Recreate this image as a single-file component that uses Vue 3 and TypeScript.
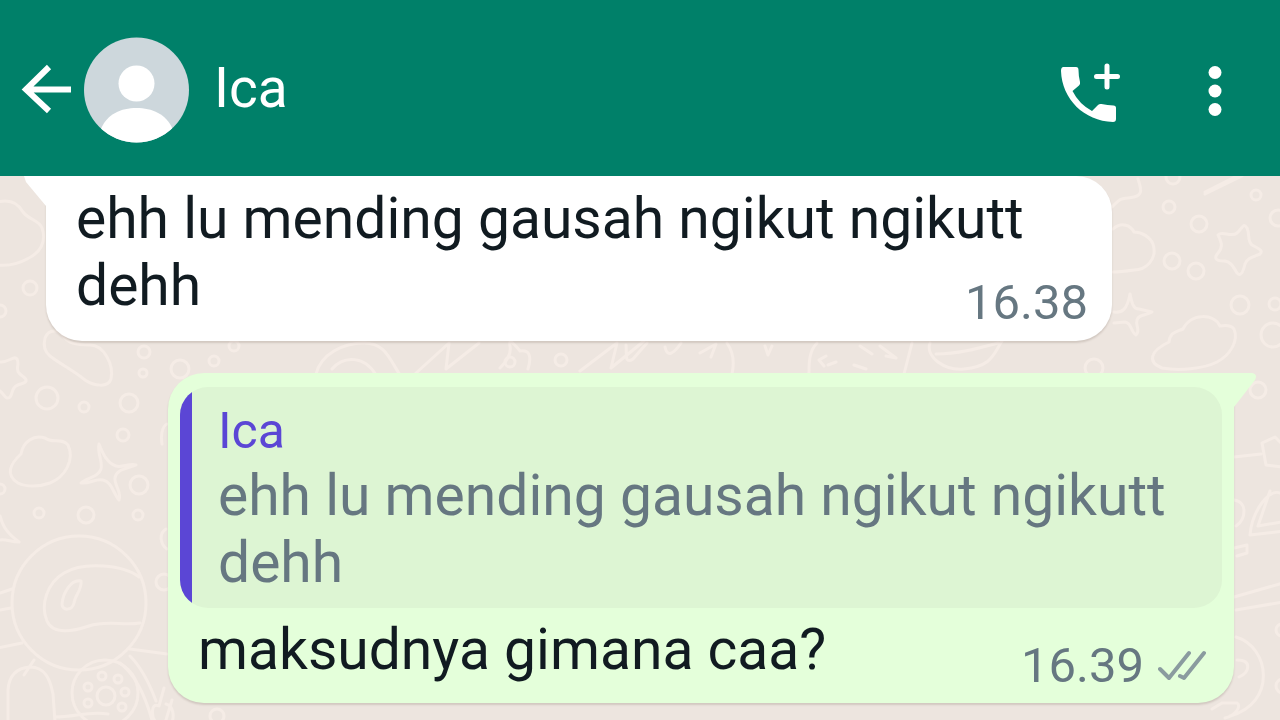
<script setup lang="ts">
interface Dot {
  x: number
  y: number
  r: number
}

const contact = 'Ica'
const original = 'ehh lu mending gausah ngikut ngikutt dehh'
const reply = 'maksudnya gimana caa?'

const dots: Dot[] = [
  { x: 30, y: 288, r: 7 }, { x: 0, y: 311, r: 6 }, { x: 144, y: 352, r: 6 }, { x: 143, y: 373, r: 4 },
  { x: 47, y: 398, r: 11 }, { x: 84, y: 407, r: 5 }, { x: 129, y: 403, r: 9 }, { x: 123, y: 435, r: 6 },
  { x: 139, y: 485, r: 9 }, { x: 86, y: 515, r: 8 }, { x: 39, y: 513, r: 5 }, { x: 138, y: 515, r: 5 },
  { x: 0, y: 489, r: 5 }, { x: 180, y: 369, r: 9 }, { x: 214, y: 361, r: 5 }, { x: 234, y: 346, r: 5 },
  { x: 164, y: 582, r: 8 }, { x: 217, y: 716, r: 7 }, { x: 561, y: 360, r: 6 }, { x: 510, y: 362, r: 5 },
  { x: 1169, y: 207, r: 6 }, { x: 1199, y: 224, r: 8 }, { x: 1172, y: 261, r: 8 }, { x: 1196, y: 271, r: 8 },
  { x: 1256, y: 195, r: 5 }, { x: 1278, y: 218, r: 8 }, { x: 1240, y: 305, r: 9 }, { x: 1275, y: 304, r: 6 },
  { x: 1273, y: 335, r: 12 }, { x: 1258, y: 390, r: 8 }, { x: 1094, y: 368, r: 9 }, { x: 1173, y: 177, r: 7 },
  { x: 1282, y: 630, r: 6 }, { x: 1283, y: 686, r: 7 },
  { x: 102, y: 676, r: 4 }, { x: 118, y: 679, r: 4 }, { x: 125, y: 692, r: 4 }, { x: 122, y: 707, r: 4 },
  { x: 88, y: 687, r: 4 }, { x: 88, y: 703, r: 4 },
]
</script>

<template>
  <div class="screen">
    <header class="bar">
      <button class="icon back" type="button" aria-label="Back">
        <svg viewBox="0 0 52 52" width="52" height="52">
          <path d="M29 5 6 27.500 29 49M6 27.500H51" />
        </svg>
      </button>
      <button class="icon avatar" type="button" aria-label="Profile">
        <svg viewBox="0 0 106 106" width="106" height="106">
          <defs>
            <clipPath id="face"><circle cx="52.500" cy="53" r="52.500" /></clipPath>
          </defs>
          <g clip-path="url(#face)">
            <rect width="106" height="106" fill="#cdd7dc" />
            <circle cx="52.500" cy="46.500" r="18" fill="#fff" />
            <path d="M17 92C23 77 37 71 52.500 71s30 6 36 21v16H17z" fill="#fff" />
          </g>
        </svg>
      </button>
      <h1 class="title">{{ contact }}</h1>
      <button class="icon call" type="button" aria-label="Add call">
        <svg viewBox="0 0 60 60" width="60" height="60">
          <path d="M3.500 4H16q2.500 0 2.500 3 0 6 1.500 12 .5 2-1 3.500L12.500 28Q19 41 32 48l6-6q1.500-1.500 3.500-1 6 1.200 12 1.500 2.500 0 2.500 2.500V56q0 3-3 3C24 58 2 36 1 8q0-4 2.500-4z" fill="#fff" />
          <path class="plus" d="M47 3v21M36.500 13.500h21" />
        </svg>
      </button>
      <button class="icon more" type="button" aria-label="More options">
        <svg viewBox="0 0 14 52" width="14" height="52" fill="#fff">
          <circle cx="7" cy="7.500" r="6.500" />
          <circle cx="7" cy="26" r="6.500" />
          <circle cx="7" cy="44.500" r="6.500" />
        </svg>
      </button>
    </header>

    <main class="chat">
      <svg class="wallpaper" viewBox="0 176 1280 544" preserveAspectRatio="xMinYMin slice" aria-hidden="true">
        <circle v-for="(d, i) in dots" :key="i" :cx="d.x" :cy="d.y" :r="d.r" />
        <path d="M-2 202C10 199 18 203 23 212c6 8 16 8 19 16 5 14-2 25-15 31-9 5-19 7-29 6" />
        <path d="M45 338c4-10 14-8 18-2 5 7 12 9 27 9 14 0 24 20 21 34-3 9-17 7-26 1-12-10-25-16-35-24-5-4-7-10-5-18z" />
        <path d="M0 362c8 1 14-7 17-3 3 5-2 10 2 14 3 4 8 4 7 8-2 4-9 2-12 7-3 4-2 11-7 10-3-1-4-5-7-7" />
        <path d="M21 454c2-12 13-20 24-16 7 6 16-1 23 7 7 15-3 32-18 38-11 4-24 4-32 0-13-8-8-19 3-29z" />
        <path d="M99 444c4 10 8 19 17 22 6 2 13-3 20-1-9 4-20 4-21 13-1 7 7 14 4 22-6-7-7-18-16-20-7-2-13 4-22 3 6-6 17-5 20-14 2-8-4-15-2-25z" />
        <path d="M0 516c2 7 4 15 19 26-8 0-13-3-19-2" />
        <circle cx="79" cy="603" r="67" />
        <path d="M139 577c-15-12-55-16-75-4-17 10-24 32-17 48 6 14 27 10 42 5 17-6 36 0 51-3M81 581c-10-2-18 12-19 23 0 7 10 7 12-1 1-8 8-13 7-22z" />
        <path d="M-2 648 22 643M130 649l37 5M0 593l12-4M0 610l11-2M34 660 24 675M120 663c16 12 25 32 32 57M130 656c12 12 20 29 26 45M8 722V690c1-14 8-22 22-23 15 0 20 12 23 27l2 28M55 717c20 0 33-6 53-3" />
        <circle cx="105" cy="693" r="33" />
        <circle cx="106" cy="696" r="9" />
        <path d="M167 424c-6 3-6 14-5 20M166 529c-8 5-5 16 1 20M164 688l-5 18c-9-4-7 11-4 15M172 700l-6 20M166 704c8 2 8 13 6 18" />
        <path d="M316 374c5-20 27-31 48-31s25 15 36 32M332 369c12-14 33-13 44 6M415 374l34-31-3 26 33-26M580 371l37-28-6 25 33-27M500 368q12-12 10-22t10 5q14-2 8 18M626 345c1 8-2 20 7 14l14-16M665 347c2 10 8 8 16-4M700 353l16-9-5 13M727 343c7 10 7 22 5 31M765 346l3 9 4-9M817 343c-8 8-8 20-8 30M826 356l-7 4 5 6M836 362l-8 3M860 346l12 8M880 346l16 12-10-2M854 365l12 4M912 343l-8 31M930 343c-5 14 15 28 34 26 28-3 29-14 38-28M936 354c22 0 40-5 62-11" />
        <path d="M1112 207c12-12 9-7 22-10 8-2 8-6 4-18M1205 192l32-16M1205 194l37-18" />
        <path d="M1113 229c9-8 18-3 21 3 8 0 16 5 19 12 5 16-8 26-19 26-7 1-15 2-21 2" />
        <path d="M1218 235c4-5 13 3 19-2 6-5 6-11 10-5 3 6 0 13 5 17 5 3 12 5 8 9-7 3-13 4-15 10-2 8-4 13-8 9-4-7-7-12-13-12-7 0-11-2-6-8 5-6 4-10 0-18z" />
        <path d="M1130 294c2 9 3 15 9 15l13 3c-7 4-13 2-15 8-2 6 4 10-1 15-6-4-4-12-11-13l-11 1M1114 312c8 1 13-2 16-18" />
        <path d="M1169 342c1-10 7-10 14-13 8-16 31-16 37-3 6-1 11-1 14 3 5 12-4 26-17 33-14 7-38 9-55 6-15-6-12-17 7-26z" />
        <path d="M1234 457l27-3M1262 443l13-6 8 8v22l-17-2zM1234 500c14 2 12 19 2 26M1282 494c-12-8-30 17-32 41l34-4M1270 491l-12 35 23-4M1234 548l13-3v8l-10 3M1234 597l49-14M1236 610l47-8M1236 637c34 10 41 66-6 79M1237 660c15 0 13 12 2 17M1212 709l10-6h15c5 3-2 13-12 15" />
      </svg>

      <article class="bubble received">
        <svg class="tail" viewBox="0 0 24 32" width="24" height="32" aria-hidden="true">
          <path d="M1 0 3 6 23 30V0z" fill="#fff" />
        </svg>
        <p class="text">{{ original }}<time class="stamp" datetime="16:38">16.38</time></p>
      </article>

      <article class="bubble sent">
        <svg class="tail" viewBox="0 0 24 36" width="24" height="36" aria-hidden="true">
          <path d="M0 0h19q6 1 3 7L1 34H0z" fill="#e4ffda" />
        </svg>
        <blockquote class="quote">
          <cite class="name">{{ contact }}</cite>
          <p class="text">{{ original }}</p>
        </blockquote>
        <div class="body">
          <p class="text">{{ reply }}</p>
          <div class="meta">
            <time datetime="16:39">16.39</time>
            <svg viewBox="0 0 48 32" width="48" height="32" role="img" aria-label="Delivered">
              <path d="m2 19 9 9L31 3M22 26l4 2L46 3" />
            </svg>
          </div>
        </div>
      </article>
    </main>
  </div>
</template>

<style>
body {
  margin: 0;
  background: #ede5df;
}
</style>

<style scoped>
.screen {
  display: flex;
  flex-direction: column;
  height: 100vh;
  overflow: hidden;
  font-family: Roboto, "Liberation Sans", sans-serif;
  color: #111b21;
}
.bar {
  display: flex;
  align-items: center;
  flex: none;
  height: 176px;
  padding: 0 58px 0 20px;
  box-sizing: border-box;
  background: #008069;
  color: #fff;
  z-index: 1;
}
.icon {
  display: block;
  flex: none;
  margin: 0;
  padding: 0;
  border: 0;
  background: none;
  cursor: pointer;
}
.icon svg,
.meta svg {
  display: block;
}
.back path {
  fill: none;
  stroke: #fff;
  stroke-width: 6;
}
.avatar {
  margin: 4px 0 0 12px;
}
.title {
  flex: 1;
  margin: 0 0 0 24px;
  font-size: 55px;
  line-height: 64px;
  font-weight: 400;
}
.call {
  margin-top: 10px;
}
.plus {
  fill: none;
  stroke: #fff;
  stroke-width: 5;
  stroke-linecap: round;
}
.more {
  margin: 6px 0 0 88px;
}
.chat {
  position: relative;
  flex: 1;
  padding: 0 46px;
  background: #ede5df;
}
.wallpaper {
  position: absolute;
  top: 0;
  left: 0;
  width: 100%;
  height: 100%;
  fill: none;
  stroke: #f5ece6;
  stroke-width: 3;
  stroke-linecap: round;
  stroke-linejoin: round;
}
.bubble {
  position: relative;
  border-radius: 36px;
  box-shadow: 0 2px 2px rgba(70, 50, 40, 0.16);
}
.received {
  margin-right: 122px;
  padding: 9px 24px 22px 30px;
  border-top-left-radius: 0;
  background: #fff;
}
.sent {
  margin: 32px 0 0 122px;
  padding: 14px 12px 20px;
  border-top-right-radius: 0;
  background: #e4ffda;
}
.tail {
  position: absolute;
  top: 0;
}
.received .tail {
  right: 100%;
  margin-right: -1px;
}
.sent .tail {
  left: 100%;
  margin-left: -1px;
}
.text {
  margin: 0;
  font-size: 57px;
  line-height: 67px;
}
.stamp {
  float: right;
  margin-top: 22px;
  font-size: 49px;
  line-height: 58px;
  color: #667781;
}
.quote {
  position: relative;
  margin: 0;
  padding: 13px 24px 12px 38px;
  border-radius: 28px;
  overflow: hidden;
  background: #ddf5d3;
  color: #667781;
}
.quote::before {
  content: "";
  position: absolute;
  inset: 0 auto 0 0;
  width: 12px;
  background: #5b46d5;
}
.name {
  display: block;
  font-size: 50px;
  line-height: 62px;
  font-style: normal;
  color: #5b46d5;
}
.body {
  display: flex;
  justify-content: space-between;
  align-items: flex-end;
  padding: 8px 16px 0 18px;
}
.meta {
  display: flex;
  align-items: center;
  gap: 14px;
  font-size: 49px;
  line-height: 58px;
  color: #667781;
}
.body .meta {
  margin-bottom: -12px;
}
.meta path {
  fill: none;
  stroke: #8a9b9f;
  stroke-width: 4;
  stroke-linecap: round;
  stroke-linejoin: round;
}
</style>
